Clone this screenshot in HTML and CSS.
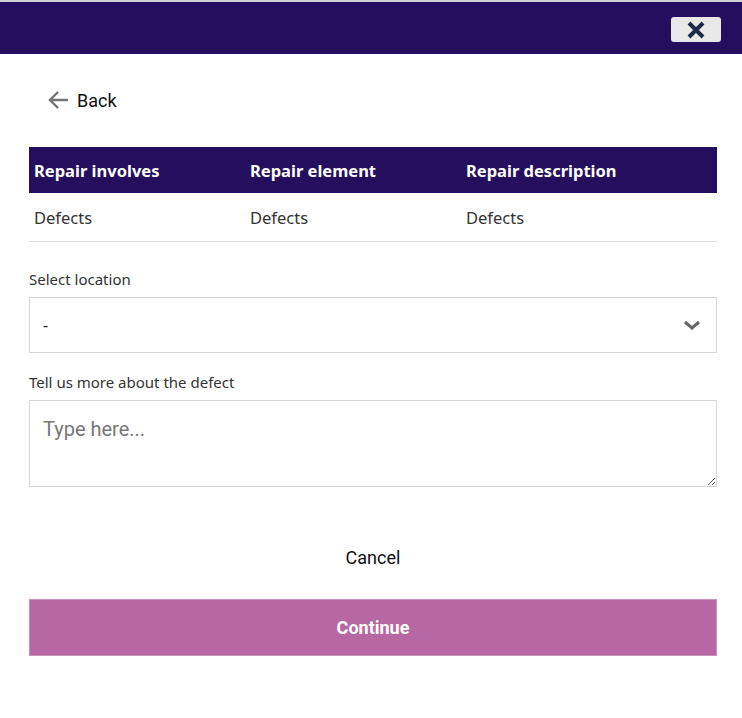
FILE: index.html
```html
<!DOCTYPE html>
<html lang="en">
  <head>
    <meta charset="UTF-8" />
    <meta name="viewport" content="width=device-width, initial-scale=1.0" />
    <title>Report a defect</title>
    <link rel="stylesheet" href="styles.css">
  </head>
  <body>
    <div class="topbar">
      <button class="close-btn" aria-label="Close">
        <svg width="20" height="18" viewBox="0 0 20 18">
          <path d="M3 2 L17 16 M17 2 L3 16" stroke="#1c2a44" stroke-width="4" stroke-linecap="butt" />
        </svg>
      </button>
    </div>
    <div class="container">
      <a class="back-link" href="#">
        <svg width="22" height="20" viewBox="0 0 22 20">
          <path d="M21 10 H3 M11 2 L3 10 L11 18" fill="none" stroke="#757575" stroke-width="2.4" />
        </svg>
        <span>Back</span>
      </a>

      <div class="repair-table">
        <div class="row head">
          <div class="cell">Repair involves</div>
          <div class="cell">Repair element</div>
          <div class="cell">Repair description</div>
        </div>
        <div class="row body">
          <div class="cell">Defects</div>
          <div class="cell">Defects</div>
          <div class="cell">Defects</div>
        </div>
      </div>

      <div class="field location">
        <label for="location">Select location</label>
        <div class="select-wrap">
          <select id="location">
            <option>-</option>
          </select>
          <svg class="chevron" width="18" height="10" viewBox="0 0 18 10">
            <path d="M2 2 L9 8 L16 2" fill="none" stroke="#666" stroke-width="3" />
          </svg>
        </div>
      </div>

      <div class="field details">
        <label for="details">Tell us more about the defect</label>
        <textarea id="details" placeholder="Type here..."></textarea>
      </div>

      <div class="actions">
        <button class="cancel-btn">Cancel</button>
        <button class="continue-btn">Continue</button>
      </div>
    </div>
  </body>
</html>
```

FILE: styles.css
```css
body {
  margin: 0;
  font-family: "Noto Sans", "Open Sans", sans-serif;
  color: #222;
  background: #fff;
}
.topbar {
  height: 52px;
  background: #240e5e;
  border-top: 2px solid #cfcfd4;
  display: flex;
  justify-content: flex-end;
  align-items: center;
  padding-right: 21px;
}
.close-btn {
  width: 50px;
  height: 25px;
  margin-top: 3px;
  border: none;
  border-radius: 3px;
  background: #e8e8e8;
  display: flex;
  align-items: center;
  justify-content: center;
  padding: 0;
}
.container {
  padding: 0 25px 0 29px;
  display: flex;
  flex-direction: column;
}
.back-link {
  display: flex;
  align-items: center;
  gap: 8px;
  margin: 34px 0 0 18px;
  height: 24px;
  text-decoration: none;
  color: #111;
  font-family: Roboto, sans-serif;
  font-size: 18px;
}
.repair-table {
  margin-top: 35px;
}
.row {
  display: grid;
  grid-template-columns: 216px 216px 1fr;
}
.row.head {
  background: #240e5e;
  color: #fff;
  font-weight: 700;
  font-size: 16.5px;
  height: 46px;
  align-items: center;
}
.row.body {
  height: 48px;
  align-items: center;
  border-bottom: 1px solid #dedede;
  font-size: 16.5px;
  color: #333;
}
.cell {
  padding-left: 5px;
}
.field {
  display: flex;
  flex-direction: column;
}
.field label {
  font-size: 15px;
  color: #333;
  height: 20px;
  margin-bottom: 8px;
}
.field.location {
  margin-top: 27px;
}
.field.details {
  margin-top: 19px;
}
.select-wrap {
  position: relative;
}
.select-wrap select {
  width: 100%;
  height: 56px;
  appearance: none;
  border: 1px solid #d6d6d6;
  border-radius: 0;
  background: #fff;
  padding: 0 13px;
  font-family: "Noto Sans", sans-serif;
  font-size: 16px;
  color: #222;
}
.chevron {
  position: absolute;
  right: 16px;
  top: 23px;
}
textarea {
  box-sizing: border-box;
  width: 100%;
  height: 87px;
  border: 1px solid #d6d6d6;
  padding: 16px 13px;
  font-family: Roboto, sans-serif;
  font-size: 20px;
  resize: vertical;
}
textarea::placeholder {
  color: #777;
}
.actions {
  display: flex;
  flex-direction: column;
  margin-top: 56px;
}
.cancel-btn {
  background: none;
  border: none;
  font-family: Roboto, sans-serif;
  font-size: 18px;
  color: #111;
  height: 28px;
  padding: 0;
}
.continue-btn {
  margin-top: 28px;
  height: 57px;
  background: #b767a3;
  border: 1px solid #c893bb;
  color: #fff;
  font-family: Roboto, sans-serif;
  font-weight: 700;
  font-size: 18px;
}
```
